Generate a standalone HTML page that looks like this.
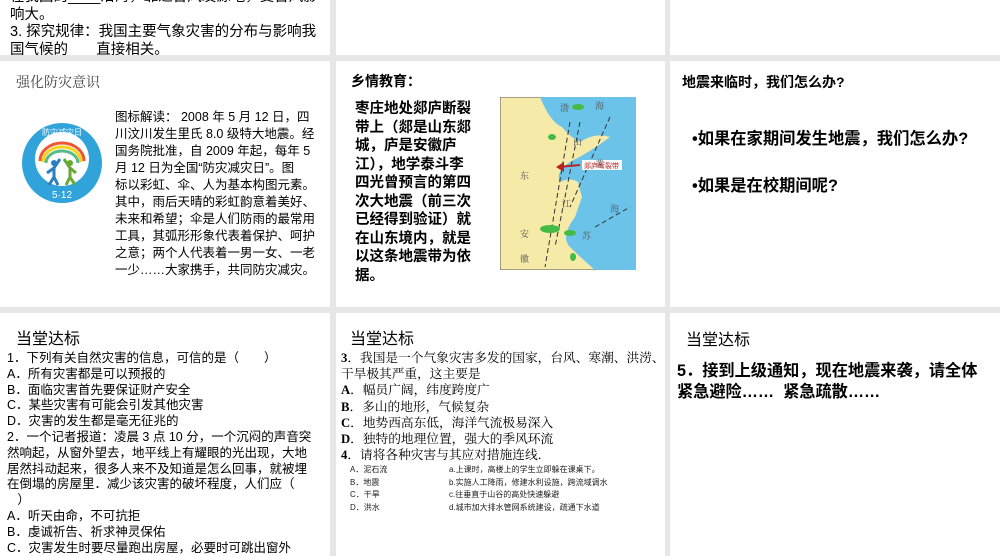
<!DOCTYPE html>
<html><head><meta charset="utf-8"><style>
body{margin:0;width:1000px;height:556px;background:#e6e6e6;position:relative;overflow:hidden;font-family:"Liberation Sans","Noto Sans CJK SC",sans-serif;color:#000}
.p{position:absolute;background:#fff;overflow:hidden}
.a{position:absolute;white-space:nowrap}
.s{font-family:"Liberation Serif","Noto Serif CJK SC",serif}
</style></head><body>
<div class="p" style="left:0;top:0;width:330px;height:55px">
 <div class="a" style="left:10px;top:-11px;font-size:14.5px;line-height:17.5px">在我国的____沿海，靠近台风发源地，受台风影<br>响大。<br>3. 探究规律：我国主要气象灾害的分布与影响我<br>国气候的&nbsp;&nbsp;&nbsp;&nbsp;&nbsp;&nbsp;&nbsp;直接相关。</div>
</div>
<div class="p" style="left:336px;top:0;width:329px;height:55px"></div>
<div class="p" style="left:670px;top:0;width:330px;height:55px"></div>

<div class="p" style="left:0;top:61px;width:330px;height:246px">
 <div class="a s" style="left:16px;top:11px;font-size:14px;color:#444">强化防灾意识</div>
 <svg style="position:absolute;left:20px;top:60px" width="84" height="84" viewBox="0 0 84 84">
  <circle cx="42" cy="42" r="40" fill="#2fa3da"/>
  <circle cx="42" cy="38" r="27" fill="#fff"/>
  <path d="M20 40 A22 18 0 0 1 64 40" fill="none" stroke="#e53" stroke-width="3"/>
  <path d="M23 41 A19 15 0 0 1 61 41" fill="none" stroke="#f7d21a" stroke-width="3"/>
  <path d="M26 42 A16 12 0 0 1 58 42" fill="none" stroke="#5b8" stroke-width="3"/>
  <circle cx="34" cy="42" r="3" fill="#2a7fc0"/><path d="M34 46 L34 56 M27 52 L34 47 L40 38 M34 56 L29 64 M34 56 L38 64" stroke="#2a7fc0" stroke-width="3" fill="none"/>
  <circle cx="50" cy="42" r="3" fill="#6a3"/><path d="M50 46 L50 56 M56 52 L50 47 L44 38 M50 56 L46 64 M50 56 L55 64" stroke="#6a3" stroke-width="3" fill="none"/>
  <text x="42" y="77" font-size="10" fill="#fff" text-anchor="middle" font-family="Liberation Sans">5·12</text>
  <text x="42" y="14" font-size="8" fill="#fff" text-anchor="middle" font-family="Noto Sans CJK SC">防灾减灾日</text>
 </svg>
 <div class="a" style="left:115px;top:48px;font-size:12.5px;line-height:17px">图标解读： 2008 年 5 月 12 日，四<br>川汶川发生里氏 8.0 级特大地震。经<br>国务院批准，自 2009 年起，每年 5<br>月 12 日为全国“防灾减灾日”。图<br>标以彩虹、伞、人为基本构图元素。<br>其中，雨后天晴的彩虹韵意着美好、<br>未来和希望；伞是人们防雨的最常用<br>工具，其弧形形象代表着保护、呵护<br>之意；两个人代表着一男一女、一老<br>一少……大家携手，共同防灾减灾。</div>
</div>

<div class="p" style="left:336px;top:61px;width:329px;height:246px">
 <div class="a" style="left:15px;top:10px;font-size:14px;font-weight:bold">乡情教育：</div>
 <div class="a" style="left:19px;top:39px;font-size:14.5px;line-height:18.5px;font-weight:bold">枣庄地处郯庐断裂<br>带上（郯是山东郯<br>城，庐是安徽庐<br>江），地学泰斗李<br>四光曾预言的第四<br>次大地震（前三次<br>已经得到验证）就<br>在山东境内，就是<br>以这条地震带为依<br>据。</div>
 <svg style="position:absolute;left:164px;top:36px" width="136" height="173" viewBox="0 0 136 173">
  <rect width="136" height="173" fill="#f5eaa8" stroke="#555"/>
  <path d="M40 0 L136 0 L136 173 L95 173 Q80 160 70 150 Q60 140 75 120 L82 100 L78 85 Q70 80 60 85 Q55 75 70 65 Q90 55 110 40 Q95 35 80 45 Q70 40 62 30 Q50 25 40 0Z" fill="#6cc3ea"/>
  <path d="M70 25 L45 170 M80 25 L55 150 M110 20 L70 110 M95 130 L130 110" stroke="#333" stroke-dasharray="5 3" fill="none"/>
  <path d="M80 68 L58 70" stroke="#b22" stroke-width="2"/><path d="M56 70 L64 65 L64 75Z" fill="#b22"/>
  <rect x="82" y="63" width="40" height="10" fill="#fff"/>
  <text x="84" y="71" font-size="7" fill="#b22" font-family="Noto Sans CJK SC">郯庐断裂带</text>
  <g font-size="9" fill="#555" font-family="Noto Serif CJK SC"><text x="60" y="14">渤</text><text x="95" y="12">海</text><text x="73" y="48">山</text><text x="95" y="70">黄</text><text x="20" y="82">东</text><text x="62" y="110">江</text><text x="110" y="115">海</text><text x="20" y="140">安</text><text x="82" y="142">苏</text><text x="20" y="165">徽</text></g>
  <g fill="#4b4"><ellipse cx="78" cy="10" rx="6" ry="3"/><ellipse cx="52" cy="40" rx="4" ry="3"/><ellipse cx="50" cy="132" rx="10" ry="4"/><ellipse cx="70" cy="136" rx="6" ry="3"/><ellipse cx="73" cy="160" rx="3" ry="4"/></g>
 </svg>
</div>

<div class="p" style="left:670px;top:61px;width:330px;height:246px">
 <div class="a" style="left:12px;top:11px;font-size:14px;font-weight:bold">地震来临时，我们怎么办?</div>
 <div class="a" style="left:22px;top:64px;font-size:16.3px;font-weight:bold">•如果在家期间发生地震，我们怎么办?</div>
 <div class="a" style="left:22px;top:111px;font-size:16.3px;font-weight:bold">•如果是在校期间呢?</div>
</div>

<div class="p" style="left:0;top:313px;width:330px;height:243px">
 <div class="a" style="left:16px;top:12px;font-size:16px">当堂达标</div>
 <div class="a" style="left:7px;top:38px;font-size:12.5px;line-height:15.8px">1．下列有关自然灾害的信息，可信的是（　　）<br>A．所有灾害都是可以预报的<br>B．面临灾害首先要保证财产安全<br>C．某些灾害有可能会引发其他灾害<br>D．灾害的发生都是毫无征兆的<br>2．一个记者报道：凌晨 3 点 10 分，一个沉闷的声音突<br>然响起，从窗外望去，地平线上有耀眼的光出现，大地<br>居然抖动起来，很多人来不及知道是怎么回事，就被埋<br>在倒塌的房屋里．减少该灾害的破坏程度，人们应（<br>&nbsp;&nbsp;&nbsp;）<br>A．听天由命，不可抗拒<br>B．虔诚祈告、祈求神灵保佑<br>C．灾害发生时要尽量跑出房屋，必要时可跳出窗外<br>D．通过对地质、生物、水文等的观测，对此灾害进行</div>
</div>

<div class="p" style="left:336px;top:313px;width:329px;height:243px">
 <div class="a" style="left:14px;top:12px;font-size:16px">当堂达标</div>
 <div class="a s" style="left:5px;top:37px;font-size:12.7px;line-height:16.2px"><b>3</b>．我国是一个气象灾害多发的国家，台风、寒潮、洪涝、<br>干旱极其严重，这主要是<br><b>A</b>．幅员广阔，纬度跨度广<br><b>B</b>．多山的地形，气候复杂<br><b>C</b>．地势西高东低，海洋气流极易深入<br><b>D</b>．独特的地理位置，强大的季风环流<br><b>4</b>．请将各种灾害与其应对措施连线．</div>
 <div class="a" style="left:14px;top:151px;font-size:8px;line-height:12.5px;color:#222">A．泥石流<br>B．地震<br>C．干旱<br>D．洪水</div>
 <div class="a" style="left:113px;top:151px;font-size:8px;line-height:12.5px;color:#222">a.上课时，高楼上的学生立即躲在课桌下。<br>b.实施人工降雨，修建水利设施，跨流域调水<br>c.往垂直于山谷的高处快速躲避<br>d.城市加大排水管网系统建设，疏通下水道</div>
</div>

<div class="p" style="left:670px;top:313px;width:330px;height:243px">
 <div class="a" style="left:16px;top:13px;font-size:16px">当堂达标</div>
 <div class="a" style="left:7px;top:48px;font-size:16.2px;line-height:21px;font-weight:bold">5．接到上级通知，现在地震来袭，请全体<br>紧急避险……&nbsp;&nbsp;紧急疏散……</div>
</div>
</body></html>
